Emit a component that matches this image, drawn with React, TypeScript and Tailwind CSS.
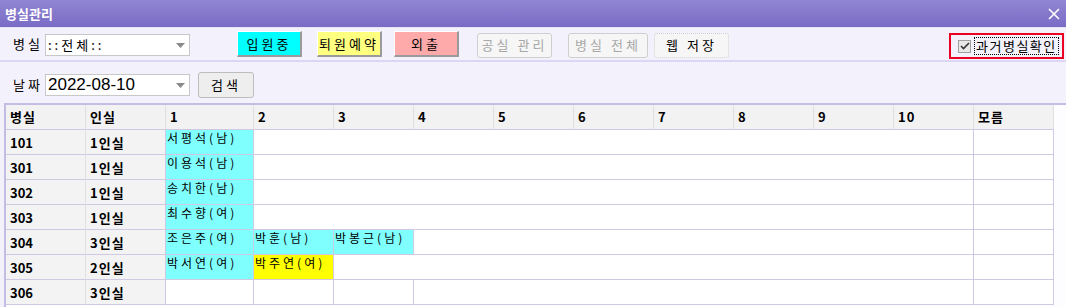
const kr = { fontFamily: '"Noto Sans CJK KR", "Liberation Sans", sans-serif' }

type Cell = { span: number; name?: string; color?: string }

const rows: { room: string; kind: string; cells: Cell[] }[] = [
  { room: '101', kind: '1인실', cells: [{ span: 1, name: '서평석(남)', color: 'bg-[#80ffff]' }, { span: 9 }] },
  { room: '301', kind: '1인실', cells: [{ span: 1, name: '이용석(남)', color: 'bg-[#80ffff]' }, { span: 9 }] },
  { room: '302', kind: '1인실', cells: [{ span: 1, name: '송치한(남)', color: 'bg-[#80ffff]' }, { span: 9 }] },
  { room: '303', kind: '1인실', cells: [{ span: 1, name: '최수향(여)', color: 'bg-[#80ffff]' }, { span: 9 }] },
  {
    room: '304',
    kind: '3인실',
    cells: [
      { span: 1, name: '조은주(여)', color: 'bg-[#80ffff]' },
      { span: 1, name: '박훈(남)', color: 'bg-[#80ffff]' },
      { span: 1, name: '박봉근(남)', color: 'bg-[#80ffff]' },
      { span: 7 },
    ],
  },
  {
    room: '305',
    kind: '2인실',
    cells: [
      { span: 1, name: '박서연(여)', color: 'bg-[#80ffff]' },
      { span: 1, name: '박주연(여)', color: 'bg-[#ffff00]' },
      { span: 8 },
    ],
  },
  { room: '306', kind: '3인실', cells: [{ span: 1 }, { span: 1 }, { span: 1 }, { span: 7 }] },
]

const spanClass: Record<number, string> = {
  1: 'col-span-1',
  7: 'col-span-7',
  8: 'col-span-8',
  9: 'col-span-9',
}

const heads = ['병실', '인실', '1', '2', '3', '4', '5', '6', '7', '8', '9', '10', '모름']

function ColorButton({ label, cls }: { label: string; cls: string }) {
  return (
    <div
      className={`h-[26px] flex items-center justify-center text-[13px] text-black tracking-[3px] border-r-2 border-b-2 border-[#9a9a9a] border-t border-l border-t-white border-l-white ${cls}`}
    >
      {label}
    </div>
  )
}

function GrayButton({ label, w, disabled }: { label: string; w: string; disabled?: boolean }) {
  return (
    <div
      className={`h-[25px] flex items-center justify-center text-[13px] tracking-[3px] rounded-[3px] border border-[#cfcfcf] bg-[#f6f6f6] ${w} ${
        disabled ? 'text-[#a8a8a8]' : 'text-black border-dotted border-[#9a9a9a]'
      }`}
    >
      {label}
    </div>
  )
}

function Select({ value, big }: { value: string; big?: boolean }) {
  return (
    <div className="w-[145px] h-[22px] bg-white border border-[#c8c8c8] flex items-center justify-between pl-[2px] pr-[4px]">
      <span
        className={big ? 'text-[17px] text-black' : 'text-[13px] text-black tracking-[3px]'}
        style={big ? { fontFamily: '"Liberation Sans", sans-serif' } : undefined}
      >
        {value}
      </span>
      <svg width="9" height="5" viewBox="0 0 9 5">
        <path d="M0 0h9L4.5 5z" fill="#8a8a8a" />
      </svg>
    </div>
  )
}

export default function App() {
  return (
    <div className="w-[1066px] h-[307px] overflow-hidden bg-[#f3f1fb] flex flex-col" style={kr}>
      {/* title bar */}
      <div className="h-[28px] shrink-0 bg-gradient-to-b from-[#9085d3] to-[#7a6bc5] flex items-center justify-between pl-[5px] pr-[6px] border-b border-[#e8e4f6]">
        <span className="text-white text-[13px] font-bold">병실관리</span>
        <svg width="12" height="12" viewBox="0 0 12 12">
          <path d="M1 1l10 10M11 1L1 11" stroke="#fff" strokeWidth="1.6" />
        </svg>
      </div>

      {/* toolbar row 1 */}
      <div className="h-[34px] shrink-0 flex items-center pl-[13px] pr-[2px] border-b-2 border-[#dcd6f4]">
        <span className="text-[13px] text-black tracking-[3px] w-[32px]">병실</span>
        <div className="mt-[2px]">
          <Select value="::전체::" />
        </div>
        <div className="ml-[47px] w-[65px]">
          <ColorButton label="입원중" cls="bg-[#00ffff]" />
        </div>
        <div className="ml-[15px] w-[65px]">
          <ColorButton label="퇴원예약" cls="bg-[#ffff80]" />
        </div>
        <div className="ml-[12px] w-[65px]">
          <ColorButton label="외출" cls="bg-[#ffaaaa]" />
        </div>
        <div className="ml-[18px] mt-[2px]">
          <GrayButton label="공실 관리" w="w-[75px]" disabled />
        </div>
        <div className="ml-[16px] mt-[2px]">
          <GrayButton label="병실 전체" w="w-[80px]" disabled />
        </div>
        <div className="ml-[6px] mt-[2px]">
          <GrayButton label="웹 저장" w="w-[75px]" />
        </div>
        <div className="ml-auto mt-[4px] w-[115px] h-[26px] border-2 border-[#ee0022] flex items-center pl-[7px]">
          <div className="w-[13px] h-[13px] border border-[#a0a0a0] bg-[#e8e8e8] flex items-center justify-center">
            <svg width="10" height="8" viewBox="0 0 10 8">
              <path d="M1 4l2.5 2.5L9 1" stroke="#333" strokeWidth="1.6" fill="none" />
            </svg>
          </div>
          <span className="ml-[3px] text-[13px] text-black tracking-[1.5px] border border-dotted border-black px-[1px] leading-[16px]">
            과거병실확인
          </span>
        </div>
      </div>

      {/* toolbar row 2 */}
      <div className="h-[40px] shrink-0 flex items-center pl-[13px] pt-[6px]">
        <span className="text-[13px] text-black tracking-[3px] w-[32px]">날짜</span>
        <Select value="2022-08-10" big />
        <div className="ml-[8px] w-[56px] h-[26px] flex items-center justify-center text-[13px] tracking-[3px] rounded-[3px] border border-[#bdbdbd] bg-[#eeeeee] text-black">
          검색
        </div>
      </div>

      {/* grid */}
      <div className="flex-1 ml-[4px] mt-[1px] border-l-2 border-t-2 border-[#c4bce2] bg-[#fdfdff]">
        <div className="w-[1048px] grid grid-cols-[80px_80px_88px_repeat(10,80px)] auto-rows-[25px]">
          {heads.map(h => (
            <div
              key={h}
              className="bg-[#f2f2f2] border-r border-[#e0e0e0] border-b border-b-[#cfc9e4] pl-[4px] pt-[2px] text-[13px] font-bold text-black tracking-[1px]"
            >
              {h}
            </div>
          ))}
          {rows.map(r => (
            <div key={r.room} className="contents">
              <div className="bg-[#f3f3f3] border-r border-[#e0e0e0] border-b border-b-[#cfc9e4] pl-[4px] pt-[3px] text-[13px] font-bold text-black">
                {r.room}
              </div>
              <div className="bg-[#f3f3f3] border-r border-[#cfc9e4] border-b pl-[4px] pt-[3px] text-[13px] font-bold text-black tracking-[1px]">
                {r.kind}
              </div>
              {r.cells.map((c, i) => (
                <div
                  key={i}
                  className={`${spanClass[c.span]} border-r border-b border-[#cfc9e4] ${c.color ?? 'bg-white'} pl-[1px] text-[12px] leading-[16px] text-black tracking-[3px]`}
                >
                  {c.name}
                </div>
              ))}
              <div className="border-r border-b border-[#cfc9e4] bg-white" />
            </div>
          ))}
        </div>
      </div>
    </div>
  )
}
